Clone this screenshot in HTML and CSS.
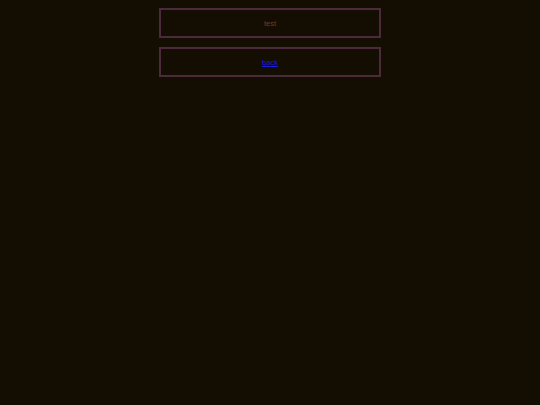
FILE: index.html
```html
<!DOCTYPE html>
<html>
<head>
<meta charset="utf-8">
<link rel="stylesheet" href="styles.css">
</head>
<body>
<div class="wrap">
  <div class="box"><span class="msg">test</span></div>
  <div class="box"><a class="back" href="#">back</a></div>
</div>
</body>
</html>
```
FILE: styles.css
```css
html, body {
  margin: 0;
  padding: 0;
  background: #130d02;
  height: 100%;
}
body {
  font-family: "Liberation Sans", Arial, sans-serif;
  font-size: 7.5px;
}
.wrap {
  display: flex;
  flex-direction: column;
  align-items: center;
  gap: 9px;
  padding-top: 8px;
}
.box {
  box-sizing: border-box;
  width: 222px;
  height: 30px;
  border: 2px solid #4b2a3c;
  display: flex;
  align-items: center;
  justify-content: center;
}
.msg {
  color: #82351f;
}
.back {
  color: #1c1cd8;
  text-decoration: underline;
}
```
